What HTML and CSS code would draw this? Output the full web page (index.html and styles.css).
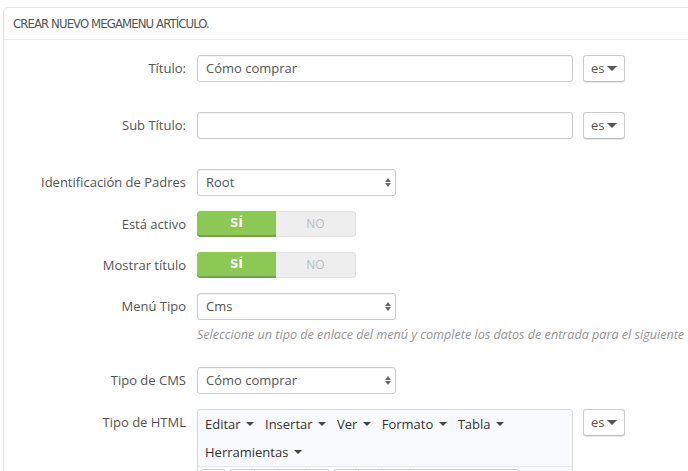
FILE: index.html
```html
<!DOCTYPE html>
<html>
<head>
<meta charset="utf-8">
<link rel="stylesheet" href="styles.css">
</head>
<body>
<div class="panel">
  <div class="panel-heading">CREAR NUEVO MEGAMENU ARTÍCULO.</div>
  <div class="form">
    <div class="row row-lang">
      <label class="lbl">Título:</label>
      <div class="field"><div class="input wide">Cómo comprar</div></div>
      <div class="langbtn">es <span class="caret"></span></div>
    </div>
    <div class="row row-lang">
      <label class="lbl">Sub Título:</label>
      <div class="field"><div class="input wide"></div></div>
      <div class="langbtn">es <span class="caret"></span></div>
    </div>
    <div class="row">
      <label class="lbl">Identificación de Padres</label>
      <div class="field"><div class="input select">Root<span class="updown"></span></div></div>
    </div>
    <div class="row row-toggle">
      <label class="lbl">Está activo</label>
      <div class="field"><div class="toggle"><span class="on">SÍ</span><span class="off">NO</span></div></div>
    </div>
    <div class="row row-toggle">
      <label class="lbl">Mostrar título</label>
      <div class="field"><div class="toggle"><span class="on">SÍ</span><span class="off">NO</span></div></div>
    </div>
    <div class="row row-help">
      <label class="lbl">Menú Tipo</label>
      <div class="field">
        <div class="input select">Cms<span class="updown"></span></div>
        <p class="help">Seleccione un tipo de enlace del menú y complete los datos de entrada para el siguiente</p>
      </div>
    </div>
    <div class="row">
      <label class="lbl">Tipo de CMS</label>
      <div class="field"><div class="input select">Cómo comprar<span class="updown"></span></div></div>
    </div>
    <div class="row row-lang">
      <label class="lbl">Tipo de HTML</label>
      <div class="field">
        <div class="editor">
          <div class="menubar">
            <span class="mi">Editar <span class="dcaret"></span></span>
            <span class="mi">Insertar <span class="dcaret"></span></span>
            <span class="mi">Ver <span class="dcaret"></span></span>
            <span class="mi">Formato <span class="dcaret"></span></span>
            <span class="mi">Tabla <span class="dcaret"></span></span>
            <span class="mi">Herramientas <span class="dcaret"></span></span>
          </div>
          <div class="toolbar">
            <span class="tg"><span class="tb"></span></span>
            <span class="tg"><span class="tb"></span><span class="tb"></span><span class="tb"></span><span class="tb"></span></span>
            <span class="tg"><span class="tb"></span><span class="tb"></span><span class="tb"></span><span class="tb wide-tb"></span></span>
          </div>
        </div>
      </div>
      <div class="langbtn">es <span class="caret"></span></div>
    </div>
  </div>
</div>
</body>
</html>
```

FILE: styles.css
```css
html, body {
  margin: 0;
  padding: 0;
  background: #fff;
  overflow: hidden;
  width: 688px;
  height: 471px;
}
body {
  font-family: "Open Sans", "Liberation Sans", sans-serif;
  font-size: 13px;
  color: #555;
}
.panel {
  margin: 7px -20px 0 3px;
  border: 1px solid #e6e6e6;
  border-radius: 5px;
  background: #fff;
  box-shadow: 0 2px 0 rgba(0,0,0,0.05);
}
.panel-heading {
  height: 31px;
  line-height: 32px;
  padding-left: 9px;
  border-bottom: 1px solid #eee;
  font-family: "DejaVu Sans", sans-serif;
  font-stretch: condensed;
  font-size: 13px;
  color: #555;
  letter-spacing: -0.9px;
  white-space: nowrap;
}
.form {
  padding-top: 15px;
}
.row {
  display: flex;
  align-items: flex-start;
  margin-bottom: 15px;
}
.row-lang {
  margin-bottom: 30px;
}
.row-toggle {
  margin-bottom: 15px;
}
.lbl {
  width: 182px;
  flex: none;
  text-align: right;
  padding-right: 11px;
  line-height: 27px;
  height: 27px;
  color: #555;
}
.row-toggle .lbl {
  line-height: 26px;
  height: 26px;
}
.field {
  flex: none;
}
.input {
  box-sizing: border-box;
  height: 27px;
  border: 1px solid #ccc;
  border-radius: 3px;
  background: #fff;
  padding: 0 8px;
  line-height: 25px;
  color: #555;
  box-shadow: inset 0 1px 1px rgba(0,0,0,0.04);
}
.wide {
  width: 376px;
}
.select {
  width: 199px;
  position: relative;
}
.updown {
  position: absolute;
  right: 7px;
  top: 8px;
  width: 0;
  height: 0;
}
.updown::before, .updown::after {
  content: "";
  position: absolute;
  left: -3px;
  border-left: 3px solid transparent;
  border-right: 3px solid transparent;
}
.updown::before {
  top: 0;
  border-bottom: 4px solid #666;
}
.updown::after {
  top: 5px;
  border-top: 4px solid #666;
}
.langbtn {
  box-sizing: border-box;
  margin-left: 10px;
  width: 42px;
  height: 27px;
  border: 1px solid #ccc;
  border-bottom-color: #bbb;
  border-radius: 3px;
  background: #fff;
  box-shadow: 0 1px 0 rgba(0,0,0,0.08);
  text-align: center;
  line-height: 25px;
  color: #555;
  font-size: 13px;
}
.caret {
  display: inline-block;
  width: 0;
  height: 0;
  border-left: 5px solid transparent;
  border-right: 5px solid transparent;
  border-top: 5px solid #555;
  vertical-align: 2px;
  margin-left: -1px;
}
.toggle {
  display: flex;
  width: 159px;
  height: 26px;
  border-radius: 3px;
  overflow: hidden;
}
.toggle span {
  flex: 1;
  box-sizing: border-box;
  height: 26px;
  text-align: center;
  font-size: 12px;
}
.on {
  background: #8bc954;
  color: #fff;
  font-family: "DejaVu Sans", sans-serif;
  font-stretch: condensed;
  font-weight: bold;
  font-size: 13px !important;
  border-bottom: 2px solid #72a53b;
  line-height: 24px;
  border-radius: 3px 0 0 3px;
}
.off {
  background: #eee;
  color: #bbb;
  border: 1px solid #e2e2e2;
  border-left: none;
  border-radius: 0 3px 3px 0;
  line-height: 24px;
}
.help {
  margin: 6px 0 0 0;
  font-style: italic;
  color: #959595;
  font-size: 12.6px;
  line-height: 18px;
  white-space: nowrap;
}
.row-help {
  margin-bottom: 23px;
}
.editor {
  box-sizing: border-box;
  width: 376px;
  border: 1px solid #d9d9d9;
  border-radius: 3px 3px 0 0;
  background: #f9fafd;
  height: 80px;
}
.menubar {
  display: flex;
  flex-wrap: wrap;
  padding: 0 0 0 7px;
}
.mi {
  line-height: 28px;
  margin-right: 11px;
  color: #333;
  font-size: 13px;
}
.dcaret {
  display: inline-block;
  width: 0;
  height: 0;
  border-left: 4px solid transparent;
  border-right: 4px solid transparent;
  border-top: 4px solid #444;
  vertical-align: 3px;
  margin-left: 2px;
}
.toolbar {
  border-top: 1px solid #e8e8e8;
  padding: 2px 0 0 2px;
  display: flex;
  gap: 3px;
}
.tg {
  display: flex;
  border: 1px solid #d0d0d0;
  border-radius: 3px;
  background: #fff;
  height: 24px;
}
.tb {
  width: 24px;
  border-right: 1px solid #e0e0e0;
}
.tb:last-child {
  border-right: none;
}
.wide-tb {
  width: 110px;
}
```
